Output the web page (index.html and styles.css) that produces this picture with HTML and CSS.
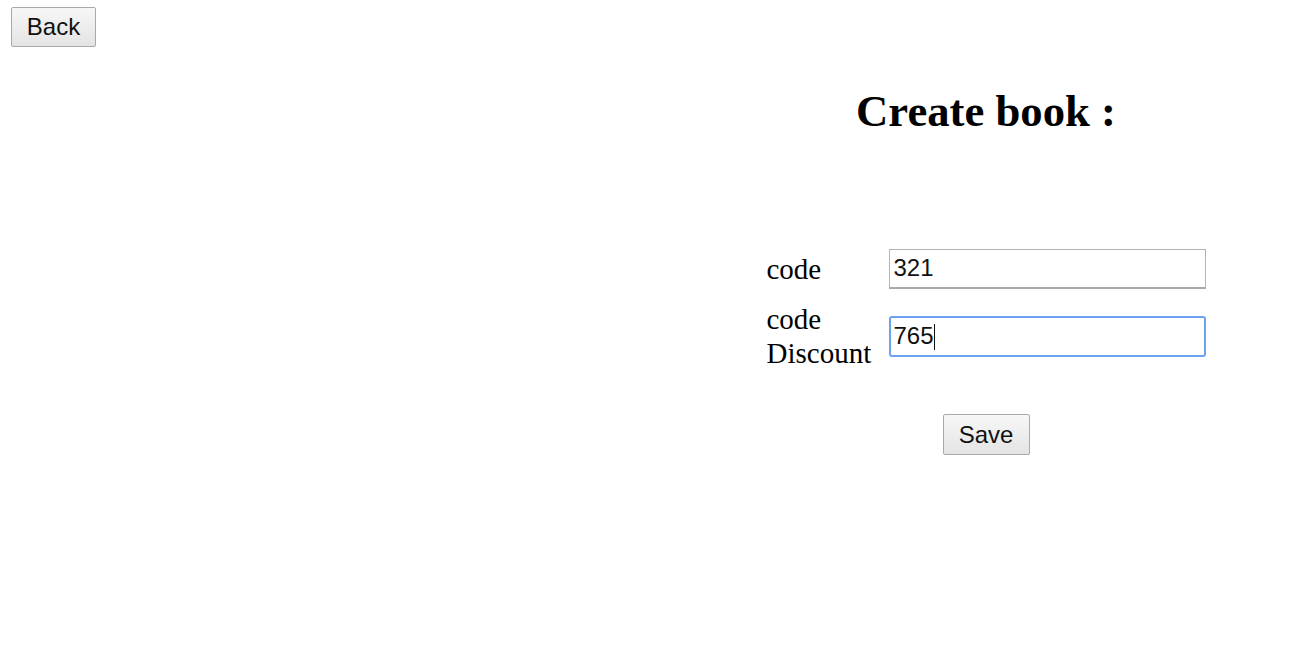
FILE: index.html
```html
<!DOCTYPE html>
<html>
<head>
<meta charset="utf-8">
<link rel="stylesheet" href="styles.css">
</head>
<body>
<div class="topbar"><button class="btn btn-back">Back</button></div>
<div class="layout">
  <div class="col-left"></div>
  <div class="col-right">
    <h2 class="title">Create book :</h2>
    <div class="form">
      <label class="lbl">code</label>
      <div class="field"><input class="inp" type="text" value="321"></div>
      <label class="lbl">code<br>Discount</label>
      <div class="field"><input class="inp inp-focus" type="text" value="765"><span class="caret"></span></div>
    </div>
    <div class="actions"><button class="btn btn-save">Save</button></div>
  </div>
</div>
</body>
</html>
```
FILE: styles.css
```css
html, body { margin: 0; padding: 0; background: #fff; }
body { font-family: "Liberation Serif", "Times New Roman", serif; color: #000; }
.topbar { padding: 7px 0 0 11px; height: 40px; }
.btn {
  font-family: "Liberation Sans", Arial, sans-serif;
  font-size: 24px;
  color: #111;
  background: linear-gradient(#f7f7f7, #e4e4e4);
  border: 1px solid #a9a9a9;
  border-radius: 2px;
  padding: 0;
  margin: 0;
  box-sizing: border-box;
  height: 40px;
  line-height: 36px;
}
.btn-back { width: 85px; }
.btn-save { width: 87px; height: 41px; }
.layout { display: grid; grid-template-columns: 1fr 1fr; }
.col-right { display: flex; flex-direction: column; align-items: center; padding-top: 39px; padding-right: 2px; }
.title { margin: 0; font-size: 44.7px; font-weight: bold; line-height: 50px; height: 50px; }
.form {
  margin-top: 112px;
  display: grid;
  grid-template-columns: 122px 317px;
  row-gap: 13px;
  align-items: center;
}
.lbl { font-size: 29px; line-height: 34px; }
.field { position: relative; height: 41px; display: flex; align-items: center; }
.inp {
  box-sizing: border-box;
  width: 317px;
  height: 40px;
  margin: 0;
  padding: 0 4px;
  font-family: "Liberation Sans", Arial, sans-serif;
  font-size: 24px;
  color: #111;
  border: 1px solid #b4b4b4;
  border-bottom: 2px solid #a9a9a9;
  outline: none;
  background: #fff;
}
.inp-focus { border: 2px solid #6ea1ee; border-radius: 3px; padding: 0 3px; height: 41px; }
.caret { position: absolute; left: 45px; top: 8px; width: 1px; height: 26px; background: #111; }
.actions { margin-top: 44px; }
```
